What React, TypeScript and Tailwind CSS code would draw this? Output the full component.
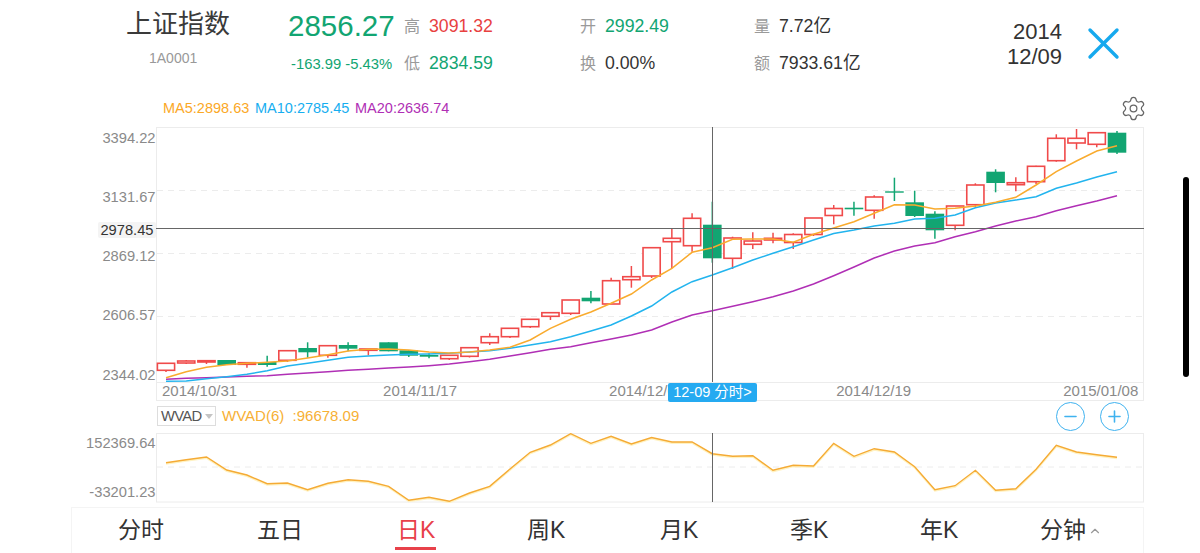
import React from 'react';
import { ChevronUp, Minus, Plus, Settings } from 'lucide-react';

const GREEN = '#12a572';
const RED = '#f04a4a';

const xOf = (i: number) => 166 + i * 20.234;

// wick top, body top, body bottom, wick bottom, colour
const candles: [number, number, number, number, 'r' | 'g'][] = [
  [363.3, 363.3, 370.3, 372, 'r'],
  [360, 361, 363, 364, 'r'],
  [360.5, 360.7, 362, 364, 'r'],
  [360, 360, 365, 365, 'g'],
  [362.7, 362.7, 364.3, 367.7, 'r'],
  [355.7, 362, 365, 366.7, 'g'],
  [350.7, 350.7, 360.3, 362, 'r'],
  [342.3, 348, 352.3, 357.7, 'g'],
  [345.7, 345.7, 355.3, 357.7, 'r'],
  [342.3, 345, 348.7, 351.3, 'g'],
  [349, 349, 350.3, 355.3, 'r'],
  [342.3, 342.3, 351.3, 351.3, 'g'],
  [350.3, 350.3, 355.7, 357, 'g'],
  [353.3, 355, 356.7, 358.3, 'g'],
  [355.3, 355.3, 358.7, 360, 'r'],
  [347.7, 347.7, 356.3, 357.5, 'r'],
  [333.3, 336.7, 342.7, 345, 'r'],
  [328.3, 328.3, 336.7, 338, 'r'],
  [319.3, 319.3, 326.7, 328, 'r'],
  [312.7, 312.7, 316.3, 320, 'r'],
  [300, 300, 313.3, 315, 'r'],
  [291, 297.7, 301.3, 303.3, 'g'],
  [277.7, 280.7, 304, 304, 'r'],
  [266, 276.7, 279.7, 287.7, 'r'],
  [247.7, 247.7, 276, 278, 'r'],
  [228.3, 238.3, 241.7, 268.3, 'r'],
  [213.3, 218.3, 245.7, 251.7, 'r'],
  [201.7, 224.7, 258.3, 262.7, 'g'],
  [236.7, 238, 258.3, 269, 'r'],
  [232.3, 241, 244.3, 249, 'r'],
  [232.7, 238.3, 240, 243.3, 'r'],
  [233.3, 234.5, 242.5, 249, 'r'],
  [218, 218, 234.5, 236, 'r'],
  [205, 208.5, 215.5, 224.3, 'r'],
  [201.7, 207.7, 209.3, 215.7, 'g'],
  [195.3, 197, 210.3, 218.7, 'r'],
  [177.7, 191.3, 192.7, 201, 'g'],
  [190.7, 202.3, 216, 217, 'g'],
  [211.3, 213.7, 230.3, 238.7, 'g'],
  [206, 206, 225.3, 230.3, 'r'],
  [183.3, 185, 204.7, 207.3, 'r'],
  [169.3, 171.7, 183, 192.3, 'g'],
  [177.3, 182.7, 184.7, 191.3, 'r'],
  [165.7, 166.3, 181.7, 184, 'r'],
  [134.3, 138.3, 160.7, 161.7, 'r'],
  [129, 138.3, 143, 149.3, 'r'],
  [132.7, 132.7, 144.3, 147.3, 'r'],
  [131, 132.7, 152.7, 154, 'g'],
];

const ma5 = [377.7, 371.7, 367.3, 364.7, 363.3, 362.3, 361, 358, 354.7, 351, 349.3, 349, 350, 352, 353, 352, 350, 347.3, 340, 328.3, 319.3, 312, 303.3, 294, 280, 268.3, 252.3, 247.7, 239.3, 239, 239, 242.3, 234.3, 228, 221.7, 213.3, 204.7, 205, 209, 208.3, 206, 202.3, 197.3, 185, 171.7, 161, 151, 145.7];
const ma10 = [381.3, 381, 378.7, 376.7, 374.3, 370.7, 366, 363.3, 360.3, 357.3, 356, 355, 354.3, 354, 353.3, 352, 350.7, 348.3, 345, 341.7, 336.7, 331, 325, 316, 306, 292, 281.7, 275, 267.7, 260, 253.3, 246.7, 240, 233.5, 230, 226, 223.3, 219, 218.3, 215, 207.7, 203, 200, 196.7, 188.3, 183, 177, 171.7];
const ma20 = [379.3, 378.3, 377.7, 377, 376.3, 375.7, 374.3, 373, 371.7, 370.3, 369.3, 368, 367, 365.7, 364, 361.7, 359.3, 356, 352.7, 349.3, 346.7, 342.7, 339, 335, 330, 322, 315, 310.7, 306.3, 301.7, 296.7, 291, 284, 275.7, 267, 258, 251, 246, 242.7, 236.7, 231.7, 226, 221, 216.7, 210.7, 205.7, 201, 195.7];
const wvad = [461.7, 458.7, 456, 469, 474, 482.7, 482, 488.7, 482.3, 478.7, 480.3, 485.3, 499.3, 496.3, 500.3, 492, 485.3, 468, 451.3, 444, 432.7, 442.3, 435.3, 443, 436.5, 441, 441, 452.7, 455.3, 454.7, 469.3, 464.3, 465, 442.3, 455.3, 447.7, 451, 465.7, 488.7, 484.7, 469.3, 489.3, 487.7, 468.3, 444.3, 451, 453.7, 456.3];

const toPoints = (ys: number[]) => ys.map((y, i) => `${xOf(i).toFixed(1)},${y}`).join(' ');

const axisLabels: [string, number][] = [
  ['3394.22', 137.5],
  ['3131.67', 196.5],
  ['2869.12', 255.5],
  ['2606.57', 315],
  ['2344.02', 375],
];

const tabs = [
  { name: '分时', width: 'w-[139px]' },
  { name: '五日', width: 'w-[140px]' },
  { name: '日K', width: 'w-[130px]', active: true },
  { name: '周K', width: 'w-[133px]' },
  { name: '月K', width: 'w-[130px]' },
  { name: '季K', width: 'w-[130px]' },
  { name: '年K', width: 'w-[120px]' },
];

const Stat = ({ label, value, color }: { label: string; value: string; color: string }) => (
  <div className="flex h-[37px] items-center">
    <span className="w-[25px] text-[16px] text-[#9a9a9a]">{label}</span>
    <span className={`text-[17.7px] ${color}`}>{value}</span>
  </div>
);

const MainChart = () => (
  <svg width="1064" height="263" viewBox="80 120 1064 263" className="ml-[80px] block">
    <rect x="156.5" y="127.5" width="987" height="255" fill="#fff" stroke="#ececec" />
    {[190.5, 253.5, 316.5].map((y) => (
      <line key={y} x1="157" x2="1143" y1={y} y2={y} stroke="#ececec" strokeDasharray="6 5" />
    ))}
    {candles.map(([wt, bt, bb, wb, c], i) => {
      const color = c === 'g' ? GREEN : RED;
      const x = xOf(i);
      return (
        <g key={i}>
          <line x1={x} x2={x} y1={wt} y2={wb} stroke={color} strokeWidth="1.5" />
          {c === 'g' ? (
            <rect x={x - 9.3} y={bt} width="18.6" height={bb - bt} fill={color} />
          ) : (
            <rect x={x - 8.6} y={bt} width="17.2" height={bb - bt} fill="#fff" stroke={color} strokeWidth="1.6" />
          )}
        </g>
      );
    })}
    <polyline points={toPoints(ma20)} fill="none" stroke="#b02fb5" strokeWidth="1.5" />
    <polyline points={toPoints(ma10)} fill="none" stroke="#22b4ee" strokeWidth="1.5" />
    <polyline points={toPoints(ma5)} fill="none" stroke="#f9ab2e" strokeWidth="1.5" />
    <line x1="712.5" x2="712.5" y1="127" y2="382" stroke="#666" />
    <line x1="156" x2="1144" y1="228.5" y2="228.5" stroke="#666" />
    <g fontSize="14.7" fill="#8a8a8a" textAnchor="end">
      {axisLabels.map(([t, y]) => (
        <text key={t} x="155.5" y={y + 5}>{t}</text>
      ))}
    </g>
    <rect x="98" y="222" width="58" height="16" rx="2" fill="#f4f4f4" />
    <text x="153.5" y="234.5" fontSize="14.7" fill="#333" textAnchor="end">2978.45</text>
  </svg>
);

const SubChart = () => (
  <svg width="1064" height="70" viewBox="80 432 1064 70" className="ml-[80px] block">
    <rect x="156.5" y="432.5" width="987" height="68.5" fill="#fff" stroke="#ececec" />
    <line x1="157" x2="1143" y1="466" y2="466" stroke="#ececec" strokeDasharray="6 5" />
    <polyline points={toPoints(wvad.map((y) => y + 1))} fill="none" stroke="#fff2c2" strokeWidth="2" />
    <polyline points={toPoints(wvad)} fill="none" stroke="#f5ab35" strokeWidth="1.4" />
    <line x1="712.5" x2="712.5" y1="432" y2="501" stroke="#666" />
    <g fontSize="14.7" fill="#8a8a8a" textAnchor="end">
      <text x="155.5" y="447">152369.64</text>
      <text x="155.5" y="496">-33201.23</text>
    </g>
  </svg>
);

const App = () => {
  return (
    <div className="relative h-[553px] w-[1200px] overflow-hidden bg-white font-['Liberation_Sans','Noto_Sans_CJK_SC',sans-serif]">
      {/* Quote header */}
      <div className="flex h-[92px] pt-[8px]">
        <div className="ml-[126px] mt-[-1px] w-[162px]">
          <div className="h-[35px] text-[26px] leading-[35px] text-[#3a3a3a]">上证指数</div>
          <div className="ml-[23px] mt-[7px] text-[14px] leading-[18px] text-[#999]">1A0001</div>
        </div>
        <div className="w-[116px]">
          <div className="h-[37px] text-[29.5px] leading-[35px] text-[#12a572]">2856.27</div>
          <div className="ml-[3px] mt-[1px] flex h-[37px] items-center text-[14.8px] text-[#12a572]">-163.99 -5.43%</div>
        </div>
        <div className="w-[176px]">
          <Stat label="高" value="3091.32" color="text-[#e8413f]" />
          <Stat label="低" value="2834.59" color="text-[#12a572]" />
        </div>
        <div className="w-[174px]">
          <Stat label="开" value="2992.49" color="text-[#12a572]" />
          <Stat label="换" value="0.00%" color="text-[#333]" />
        </div>
        <div className="w-[250px]">
          <Stat label="量" value="7.72亿" color="text-[#333]" />
          <Stat label="额" value="7933.61亿" color="text-[#333]" />
        </div>
        <div className="mt-[11px] w-[58px] text-right text-[22px] leading-[25px] text-[#333]">
          <div>2014</div>
          <div>12/09</div>
        </div>
        <svg className="ml-[24px] mt-[18px]" width="35" height="35" viewBox="0 0 35 35" fill="none" stroke="#16a9ee" strokeWidth="3.4" strokeLinecap="round">
          <line x1="4" y1="4" x2="31" y2="31" />
          <line x1="31" y1="4" x2="4" y2="31" />
        </svg>
      </div>

      {/* Moving averages */}
      <div className="flex h-[28px] w-[1144px] items-center pl-[163px] pt-[6px] text-[14.5px]">
        <span className="w-[92px] text-[#fba826]">MA5:2898.63</span>
        <span className="w-[100px] text-[#16aef0]">MA10:2785.45</span>
        <span className="text-[#b02fb5]">MA20:2636.74</span>
        <Settings className="ml-auto mr-[-3px] mt-[-2px] text-[#666]" size={27} strokeWidth={1.1} />
      </div>

      <MainChart />

      {/* Date strip */}
      <div className="relative ml-[156px] flex h-[18px] w-[988px] items-center gap-[152px] border-x border-b border-[#ececec] pl-[5px] text-[15px] text-[#8a8a8a]">
        <span className="mr-[-6px]">2014/10/31</span>
        <span>2014/11/17</span>
        <span>2014/12/09</span>
        <span>2014/12/19</span>
        <span>2015/01/08</span>
        <div className="absolute left-[511px] top-0 flex h-[19px] w-[89px] items-center justify-center rounded-[2px] bg-[#25aaf1] text-[14.5px] text-white">
          12-09 分时&gt;
        </div>
      </div>

      {/* Indicator selector + zoom */}
      <div className="ml-[157px] flex h-[32px] w-[987px] items-center pb-[2px]">
        <div className="flex h-[20px] w-[59px] items-center border border-[#ddd] pl-[3px] text-[14.8px] tracking-[-0.7px] text-[#555]">
          WVAD
          <span className="ml-[3px] h-0 w-0 border-x-[4px] border-t-[5px] border-x-transparent border-t-[#c4c4c4]" />
        </div>
        <span className="ml-[6px] whitespace-pre text-[15px] text-[#f7b035]">WVAD(6)  :96678.09</span>
        <div className="ml-auto mr-[15px] flex gap-[15px]">
          <div className="flex h-[29px] w-[29px] items-center justify-center rounded-full border-[1.5px] border-[#3fb2ef] text-[#3fb2ef]">
            <Minus size={19} strokeWidth={2} />
          </div>
          <div className="flex h-[29px] w-[29px] items-center justify-center rounded-full border-[1.5px] border-[#3fb2ef] text-[#3fb2ef]">
            <Plus size={19} strokeWidth={2} />
          </div>
        </div>
      </div>

      <SubChart />

      {/* Period tabs */}
      <div className="ml-[71px] mt-[4px] flex h-[47px] w-[1073px] items-center border border-[#f4f4f4] pl-[46px] text-[23px] text-[#333]">
        {tabs.map((t) => (
          <div key={t.name} className={t.width}>
            <span className={t.active ? 'relative text-[#e8414a]' : ''}>
              {t.name}
              {t.active && <span className="absolute bottom-[-7px] left-[-2px] right-[-1px] h-[3px] bg-[#e8414a]" />}
            </span>
          </div>
        ))}
        <span>分钟</span>
        <ChevronUp className="ml-[2px] text-[#999]" size={14} />
      </div>

      {/* iOS scroll indicator */}
      <div className="absolute left-[1183px] top-[177px] h-[200px] w-[6px] rounded-full bg-black" />
    </div>
  );
};

export default App;
